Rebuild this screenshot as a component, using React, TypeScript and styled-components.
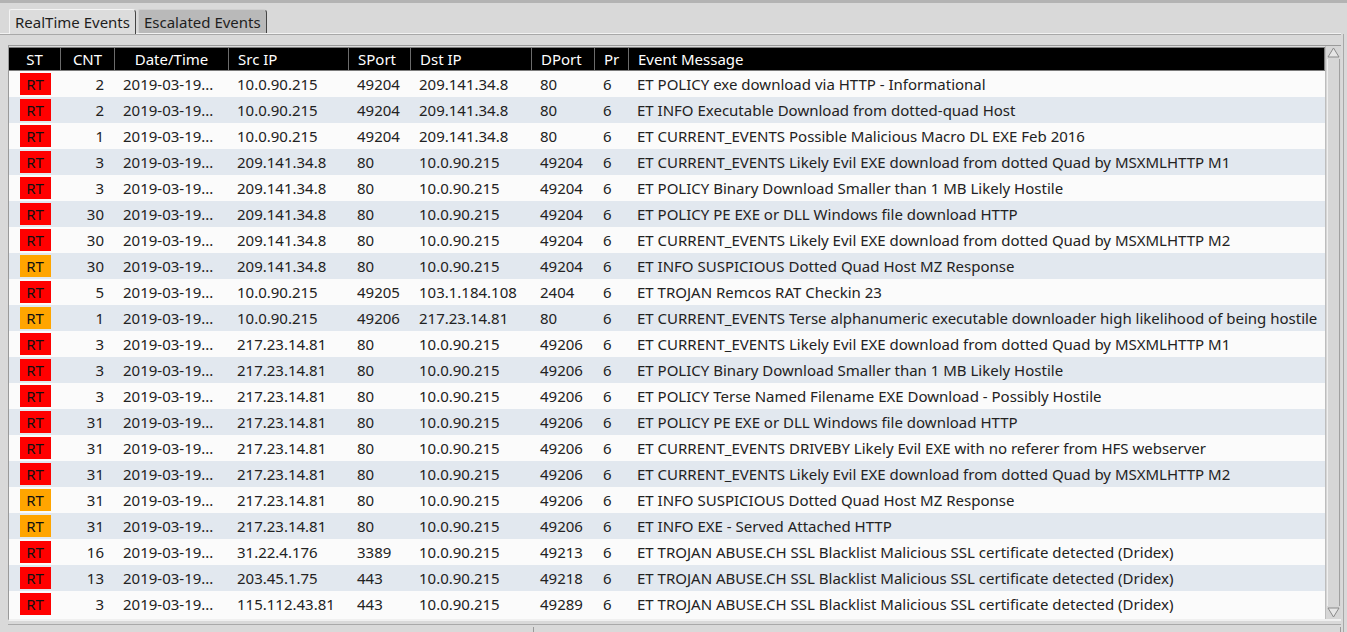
import styled, { createGlobalStyle } from "styled-components"

interface EventRow {
  st: "RT" | "RTW";
  cnt: number;
  date: string;
  src: string;
  sport: string;
  dst: string;
  dport: string;
  pr: string;
  msg: string;
}

const GlobalStyle = createGlobalStyle`
  html, body {
    margin: 0;
    padding: 0;
    background: #d9d9d9;
    font-family: "Noto Sans", "Open Sans", sans-serif;
    overflow: hidden;
  }
`

const COLS = "51px 54px 114px 120px 62px 121px 63px 34px 1fr"

const Window = styled.div`
  width: 1347px;
  height: 632px;
  box-sizing: border-box;
  border-top: 3px solid #b3b3b3;
  display: flex;
  flex-direction: column;
  background: #d9d9d9;
`

const TabBar = styled.div`
  display: flex;
  align-items: flex-end;
  padding: 6px 0 0 9px;
  height: 26px;
  border-bottom: 1px solid #f2f2f2;
  box-shadow: 0 1px 0 #a8a8a8;
  margin-right: 6px;
`

const Tab = styled.div<{ $active?: boolean }>`
  height: ${(p) => (p.$active ? "25px" : "24px")};
  box-sizing: border-box;
  padding: 0 5px;
  display: flex;
  align-items: center;
  font-size: 15px;
  color: #1e1e1e;
  background: ${(p) => (p.$active ? "#dcdcdc" : "#b9b9b9")};
  border: 1px solid ${(p) => (p.$active ? "#f4f4f4" : "#cfcfcf")};
  border-right: 1px solid #444;
  border-bottom: none;
  border-top-right-radius: 4px;
  border-top-left-radius: 2px;
  margin-bottom: ${(p) => (p.$active ? "-1px" : "0")};
  margin-right: 2px;
`

const Panel = styled.div`
  flex: 1;
  display: flex;
  flex-direction: column;
  padding: 11px 2px 0 8px;
  border-right: 1px solid #a8a8a8;
  margin-right: 3px;
`

const Frame = styled.div`
  display: flex;
  height: 573px;
  border-top: 1px solid #9a9a9a;
  border-left: 1px solid #9a9a9a;
  border-bottom: 2px solid #f0f0f0;
  background: #fbfbfb;
`

const TableArea = styled.div`
  flex: 1;
  display: flex;
  flex-direction: column;
  padding-top: 1px;
  background: #dcdcdc;
`

const HeaderRow = styled.div`
  display: grid;
  grid-template-columns: ${COLS};
  height: 24px;
  box-sizing: border-box;
  background: #000;
  border: 1px solid #7c7c7c;
  border-left: none;
`

const HeaderCell = styled.div<{ $center?: boolean }>`
  color: #fff;
  font-size: 15px;
  line-height: 22px;
  text-align: ${(p) => (p.$center ? "center" : "left")};
  padding-left: ${(p) => (p.$center ? "0" : "9px")};
  border-left: 1px solid #6c6c6c;
  white-space: nowrap;
  overflow: hidden;
  &:first-child {
    border-left: none;
  }
`

const Body = styled.div`
  flex: 1;
  background: #fbfbfb;
`

const Row = styled.div<{ $alt?: boolean }>`
  display: grid;
  grid-template-columns: ${COLS};
  height: 26px;
  align-items: center;
  background: ${(p) => (p.$alt ? "#e2e8ef" : "#fbfbfb")};
`

const Cell = styled.div<{ $right?: boolean }>`
  font-size: 15px;
  color: #222;
  white-space: nowrap;
  overflow: hidden;
  text-align: ${(p) => (p.$right ? "right" : "left")};
  padding: ${(p) => (p.$right ? "0 10px 0 0" : "0 0 0 9px")};
`

const BadgeCell = styled.div`
  display: flex;
  justify-content: center;
`

const Badge = styled.div<{ $warn?: boolean }>`
  width: 31px;
  height: 22px;
  box-sizing: border-box;
  background: ${(p) => (p.$warn ? "#ffa500" : "#ff0000")};
  color: #111;
  font-size: 15px;
  line-height: 22px;
  text-align: center;
  margin-left: 1px;
`

const ScrollBar = styled.div`
  width: 15px;
  display: flex;
  flex-direction: column;
  background: #d6d6d6;
  border-left: 1px solid #bdbdbd;
`

const ScrollTrack = styled.div`
  flex: 1;
  margin: 0 1px;
  border-left: 1px solid #efefef;
  border-right: 1px solid #a0a0a0;
`

const Arrow = styled.svg`
  display: block;
  width: 13px;
  height: 11px;
  margin: 1px 1px;
`

const StatusBar = styled.div`
  display: flex;
  height: 8px;
  border-top: 1px solid #a9a9a9;
  margin-top: 3px;
`

const StatusPart = styled.div<{ $w?: number }>`
  width: ${(p) => (p.$w ? `${p.$w}px` : "auto")};
  flex: ${(p) => (p.$w ? "none" : "1")};
  border-right: 1px solid #9a9a9a;
  margin-top: 2px;
`

const rows: EventRow[] = [
  { st: "RT", cnt: 2, date: "2019-03-19...", src: "10.0.90.215", sport: "49204", dst: "209.141.34.8", dport: "80", pr: "6", msg: "ET POLICY exe download via HTTP - Informational" },
  { st: "RT", cnt: 2, date: "2019-03-19...", src: "10.0.90.215", sport: "49204", dst: "209.141.34.8", dport: "80", pr: "6", msg: "ET INFO Executable Download from dotted-quad Host" },
  { st: "RT", cnt: 1, date: "2019-03-19...", src: "10.0.90.215", sport: "49204", dst: "209.141.34.8", dport: "80", pr: "6", msg: "ET CURRENT_EVENTS Possible Malicious Macro DL EXE Feb 2016" },
  { st: "RT", cnt: 3, date: "2019-03-19...", src: "209.141.34.8", sport: "80", dst: "10.0.90.215", dport: "49204", pr: "6", msg: "ET CURRENT_EVENTS Likely Evil EXE download from dotted Quad by MSXMLHTTP M1" },
  { st: "RT", cnt: 3, date: "2019-03-19...", src: "209.141.34.8", sport: "80", dst: "10.0.90.215", dport: "49204", pr: "6", msg: "ET POLICY Binary Download Smaller than 1 MB Likely Hostile" },
  { st: "RT", cnt: 30, date: "2019-03-19...", src: "209.141.34.8", sport: "80", dst: "10.0.90.215", dport: "49204", pr: "6", msg: "ET POLICY PE EXE or DLL Windows file download HTTP" },
  { st: "RT", cnt: 30, date: "2019-03-19...", src: "209.141.34.8", sport: "80", dst: "10.0.90.215", dport: "49204", pr: "6", msg: "ET CURRENT_EVENTS Likely Evil EXE download from dotted Quad by MSXMLHTTP M2" },
  { st: "RTW", cnt: 30, date: "2019-03-19...", src: "209.141.34.8", sport: "80", dst: "10.0.90.215", dport: "49204", pr: "6", msg: "ET INFO SUSPICIOUS Dotted Quad Host MZ Response" },
  { st: "RT", cnt: 5, date: "2019-03-19...", src: "10.0.90.215", sport: "49205", dst: "103.1.184.108", dport: "2404", pr: "6", msg: "ET TROJAN Remcos RAT Checkin 23" },
  { st: "RTW", cnt: 1, date: "2019-03-19...", src: "10.0.90.215", sport: "49206", dst: "217.23.14.81", dport: "80", pr: "6", msg: "ET CURRENT_EVENTS Terse alphanumeric executable downloader high likelihood of being hostile" },
  { st: "RT", cnt: 3, date: "2019-03-19...", src: "217.23.14.81", sport: "80", dst: "10.0.90.215", dport: "49206", pr: "6", msg: "ET CURRENT_EVENTS Likely Evil EXE download from dotted Quad by MSXMLHTTP M1" },
  { st: "RT", cnt: 3, date: "2019-03-19...", src: "217.23.14.81", sport: "80", dst: "10.0.90.215", dport: "49206", pr: "6", msg: "ET POLICY Binary Download Smaller than 1 MB Likely Hostile" },
  { st: "RT", cnt: 3, date: "2019-03-19...", src: "217.23.14.81", sport: "80", dst: "10.0.90.215", dport: "49206", pr: "6", msg: "ET POLICY Terse Named Filename EXE Download - Possibly Hostile" },
  { st: "RT", cnt: 31, date: "2019-03-19...", src: "217.23.14.81", sport: "80", dst: "10.0.90.215", dport: "49206", pr: "6", msg: "ET POLICY PE EXE or DLL Windows file download HTTP" },
  { st: "RT", cnt: 31, date: "2019-03-19...", src: "217.23.14.81", sport: "80", dst: "10.0.90.215", dport: "49206", pr: "6", msg: "ET CURRENT_EVENTS DRIVEBY Likely Evil EXE with no referer from HFS webserver" },
  { st: "RT", cnt: 31, date: "2019-03-19...", src: "217.23.14.81", sport: "80", dst: "10.0.90.215", dport: "49206", pr: "6", msg: "ET CURRENT_EVENTS Likely Evil EXE download from dotted Quad by MSXMLHTTP M2" },
  { st: "RTW", cnt: 31, date: "2019-03-19...", src: "217.23.14.81", sport: "80", dst: "10.0.90.215", dport: "49206", pr: "6", msg: "ET INFO SUSPICIOUS Dotted Quad Host MZ Response" },
  { st: "RTW", cnt: 31, date: "2019-03-19...", src: "217.23.14.81", sport: "80", dst: "10.0.90.215", dport: "49206", pr: "6", msg: "ET INFO EXE - Served Attached HTTP" },
  { st: "RT", cnt: 16, date: "2019-03-19...", src: "31.22.4.176", sport: "3389", dst: "10.0.90.215", dport: "49213", pr: "6", msg: "ET TROJAN ABUSE.CH SSL Blacklist Malicious SSL certificate detected (Dridex)" },
  { st: "RT", cnt: 13, date: "2019-03-19...", src: "203.45.1.75", sport: "443", dst: "10.0.90.215", dport: "49218", pr: "6", msg: "ET TROJAN ABUSE.CH SSL Blacklist Malicious SSL certificate detected (Dridex)" },
  { st: "RT", cnt: 3, date: "2019-03-19...", src: "115.112.43.81", sport: "443", dst: "10.0.90.215", dport: "49289", pr: "6", msg: "ET TROJAN ABUSE.CH SSL Blacklist Malicious SSL certificate detected (Dridex)" },
]

export default function App() {
  return (
    <Window>
      <GlobalStyle />
      <TabBar>
        <Tab $active>RealTime Events</Tab>
        <Tab>Escalated Events</Tab>
      </TabBar>
      <Panel>
        <Frame>
          <TableArea>
            <HeaderRow>
              <HeaderCell $center>ST</HeaderCell>
              <HeaderCell $center>CNT</HeaderCell>
              <HeaderCell $center>Date/Time</HeaderCell>
              <HeaderCell>Src IP</HeaderCell>
              <HeaderCell>SPort</HeaderCell>
              <HeaderCell>Dst IP</HeaderCell>
              <HeaderCell>DPort</HeaderCell>
              <HeaderCell>Pr</HeaderCell>
              <HeaderCell>Event Message</HeaderCell>
            </HeaderRow>
            <Body>
              {rows.map((r, i) => (
                <Row key={i} $alt={i % 2 === 1}>
                  <BadgeCell>
                    <Badge $warn={r.st === "RTW"}>RT</Badge>
                  </BadgeCell>
                  <Cell $right>{r.cnt}</Cell>
                  <Cell>{r.date}</Cell>
                  <Cell>{r.src}</Cell>
                  <Cell>{r.sport}</Cell>
                  <Cell>{r.dst}</Cell>
                  <Cell>{r.dport}</Cell>
                  <Cell>{r.pr}</Cell>
                  <Cell>{r.msg}</Cell>
                </Row>
              ))}
            </Body>
          </TableArea>
          <ScrollBar>
            <Arrow viewBox="0 0 13 11">
              <path d="M6.5 1 L12 10 L1 10 Z" fill="#e6e6e6" stroke="#8a8a8a" strokeWidth="1" />
            </Arrow>
            <ScrollTrack />
            <Arrow viewBox="0 0 13 11">
              <path d="M6.5 10 L12 1 L1 1 Z" fill="#e6e6e6" stroke="#8a8a8a" strokeWidth="1" />
            </Arrow>
          </ScrollBar>
        </Frame>
        <StatusBar>
          <StatusPart $w={525} />
          <StatusPart />
        </StatusBar>
      </Panel>
    </Window>
  )
}
